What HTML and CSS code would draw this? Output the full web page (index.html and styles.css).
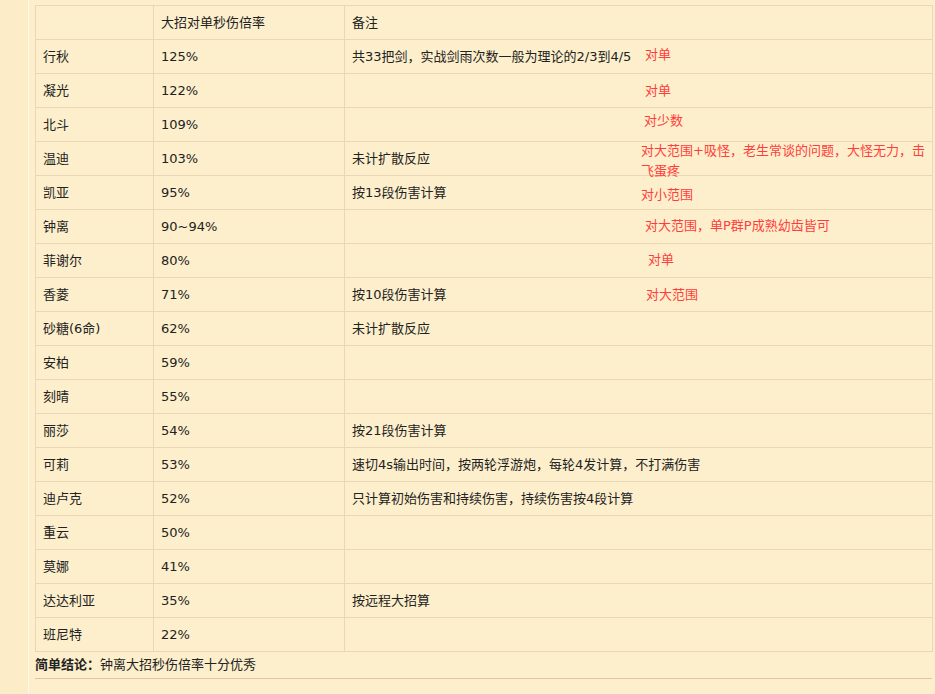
FILE: index.html
```html
<!DOCTYPE html>
<html lang="zh-CN">
<head>
<meta charset="utf-8">
<title>大招对单秒伤倍率</title>
<link rel="stylesheet" href="styles.css">
</head>
<body>
<div class="page">
  <div class="side"></div>
  <div class="main">
    <div class="table-wrap">
      <table class="dmg">
        <colgroup><col class="c1"><col class="c2"><col class="c3"></colgroup>
        <tr><td></td><td>大招对单秒伤倍率</td><td>备注</td></tr>
        <tr><td>行秋</td><td>125%</td><td>共33把剑，实战剑雨次数一般为理论的2/3到4/5</td></tr>
        <tr><td>凝光</td><td>122%</td><td></td></tr>
        <tr><td>北斗</td><td>109%</td><td></td></tr>
        <tr><td>温迪</td><td>103%</td><td>未计扩散反应</td></tr>
        <tr><td>凯亚</td><td>95%</td><td>按13段伤害计算</td></tr>
        <tr><td>钟离</td><td>90~94%</td><td></td></tr>
        <tr><td>菲谢尔</td><td>80%</td><td></td></tr>
        <tr><td>香菱</td><td>71%</td><td>按10段伤害计算</td></tr>
        <tr><td>砂糖(6命)</td><td>62%</td><td>未计扩散反应</td></tr>
        <tr><td>安柏</td><td>59%</td><td></td></tr>
        <tr><td>刻晴</td><td>55%</td><td></td></tr>
        <tr><td>丽莎</td><td>54%</td><td>按21段伤害计算</td></tr>
        <tr><td>可莉</td><td>53%</td><td>速切4s输出时间，按两轮浮游炮，每轮4发计算，不打满伤害</td></tr>
        <tr><td>迪卢克</td><td>52%</td><td>只计算初始伤害和持续伤害，持续伤害按4段计算</td></tr>
        <tr><td>重云</td><td>50%</td><td></td></tr>
        <tr><td>莫娜</td><td>41%</td><td></td></tr>
        <tr><td>达达利亚</td><td>35%</td><td>按远程大招算</td></tr>
        <tr><td>班尼特</td><td>22%</td><td></td></tr>
      </table>
      <span class="note" style="left:610px;top:40px">对单</span>
      <span class="note" style="left:610px;top:76px">对单</span>
      <span class="note" style="left:609px;top:106px">对少数</span>
      <span class="note wide" style="left:606px;top:136px">对大范围+吸怪，老生常谈的问题，大怪无力，击飞蛋疼</span>
      <span class="note" style="left:606px;top:180px">对小范围</span>
      <span class="note" style="left:610px;top:211px">对大范围，单P群P成熟幼齿皆可</span>
      <span class="note" style="left:613px;top:245px">对单</span>
      <span class="note" style="left:611px;top:280px">对大范围</span>
    </div>
    <p class="summary"><b>简单结论：</b>钟离大招秒伤倍率十分优秀</p>
  </div>
</div>
</body>
</html>
```
FILE: styles.css
```css
html, body {
  margin: 0;
  padding: 0;
  background: #fdefcc;
}
body {
  font-family: "DejaVu Sans", "Noto Sans CJK SC", sans-serif;
  font-size: 13px;
  color: #222;
}
.page {
  display: flex;
  min-height: 694px;
}
.side {
  width: 28px;
  flex: none;
  background: #fdecc8;
  border-right: 1px solid #fff8ea;
}
.main {
  padding: 5px 0 0 6px;
  width: 897px;
}
.table-wrap {
  position: relative;
}
.dmg {
  border-collapse: collapse;
  width: 897px;
  table-layout: fixed;
}
.c1 { width: 118px; }
.c2 { width: 191px; }
.c3 { width: 588px; }
.dmg td {
  height: 33px;
  padding: 0 7px;
  border: 1px solid #ebd7b5;
  line-height: 20px;
  vertical-align: middle;
  white-space: nowrap;
  box-sizing: border-box;
}
.dmg tr {
  height: 34px;
}
.note {
  position: absolute;
  color: #ff3d3d;
  line-height: 20px;
  white-space: nowrap;
}
.note.wide {
  white-space: normal;
  width: 284px;
}
.summary {
  margin: 3px 0 0;
  line-height: 20px;
  padding-bottom: 3px;
  border-bottom: 1px solid #e3c59c;
}
.summary b {
  font-weight: bold;
}
```
